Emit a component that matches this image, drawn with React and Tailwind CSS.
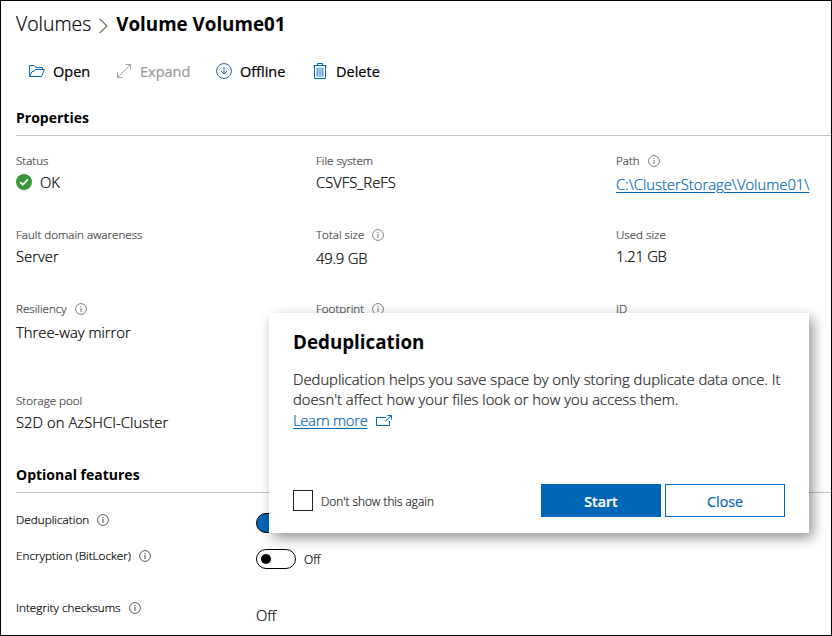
import clsx from "clsx";

const Info = ({ className }) => (
  <svg className={clsx("size-3 shrink-0", className)} viewBox="0 0 12 12" fill="none" stroke="currentColor">
    <circle cx="6" cy="6" r="5.4" strokeWidth="0.75" />
    <path d="M6 5v4M6 3v1.1" strokeWidth="0.85" />
  </svg>
);

const FolderIcon = () => (
  <svg className="-mt-0.5 h-4 w-4" viewBox="0 0 16 16" fill="none" stroke="#0067b8" strokeWidth="1">
    <path d="M0.5 13.5V2.5H5.3L6.8 4.5H13.5V6.5M0.5 13.5H12.6L15.4 6.5H6.2L4.7 8.5H3L0.7 13.5" />
  </svg>
);

const ExpandIcon = () => (
  <svg className="-mt-0.5 h-4 w-4" viewBox="0 0 16 16" fill="none" stroke="#a0a0a0" strokeWidth="1">
    <path d="M1.5 14.5L14.5 1.5M9.5 1.5H14.5V6.5M1.5 9.5V14.5H6.5" />
  </svg>
);

const OfflineIcon = () => (
  <svg className="-mt-0.5 h-4 w-4" viewBox="0 0 16 16" fill="none" stroke="#1b62b5" strokeWidth="1">
    <circle cx="8" cy="8" r="7.4" />
    <path d="M8 4V11M5 8L8 11L11 8" />
  </svg>
);

const TrashIcon = () => (
  <svg className="-mt-0.5 h-4 w-4" viewBox="0 0 16 16" fill="none" stroke="#0067b8" strokeWidth="1">
    <path d="M4 4.5H12V14H4Z" fill="#a9d3f5" stroke="none" />
    <path d="M1.5 2.5H14.5M5.5 2.5V0.5H10.5V2.5M2.5 2.5V15.5H13.5V2.5" />
    <path d="M5.5 5V13M8 5V13M10.5 5V13" stroke="#5b9bd8" />
  </svg>
);

function Action({ icon, children, className }) {
  return (
    <button className={clsx("flex h-6 items-center gap-2 text-[14.5px] leading-6 font-medium", className)}>
      {icon}
      <span>{children}</span>
    </button>
  );
}

function Field({ label, info, children, className }) {
  return (
    <div className="w-[300px] shrink-0">
      <div className={clsx("flex items-center gap-2 text-[11.6px] leading-[17px] text-[#444]", info && "mb-0.5")}>
        <span>{label}</span>
        {info && <Info className="mt-px text-[#555]" />}
      </div>
      <div className={clsx("flex h-[27px] items-center text-[14.8px] leading-[27px]", className)}>{children}</div>
    </div>
  );
}

function FeatureLabel({ children }) {
  return (
    <div className="flex w-60 items-center gap-2 text-[11.75px] leading-4">
      <span>{children}</span>
      <Info className="mt-px text-[#222]" />
    </div>
  );
}

function SectionTitle({ children, className }) {
  return (
    <h2
      className={clsx(
        "h-7 border-b border-[#c4c4c4] text-[14px] leading-5 font-bold [-webkit-text-stroke:0]",
        className
      )}
    >
      {children}
    </h2>
  );
}

export default function App() {
  return (
    <div className="relative h-[636px] w-[832px] overflow-hidden border border-black bg-white pl-[15px] font-['Open_Sans','Noto_Sans',sans-serif] font-[350] whitespace-nowrap text-black [-webkit-text-stroke:0.22px]">
      <header className="flex h-[46px] items-center text-[19.4px] leading-6">
        <span>Volumes</span>
        <svg className="mt-1 ml-2 h-4 w-[9px]" viewBox="0 0 9 16" fill="none" stroke="#6b5a48" strokeWidth="1.1">
          <path d="M0.6 0.8L8 8L0.6 15.2" />
        </svg>
        <h1 className="ml-2 text-[18.8px] font-bold [-webkit-text-stroke:0]">Volume Volume01</h1>
      </header>

      <nav className="mt-[13px] flex h-6 items-center">
        <Action icon={<FolderIcon />} className="ml-[13px] w-[87px]">Open</Action>
        <Action icon={<ExpandIcon />} className="w-[100px] text-[#9a9a9a]">Expand</Action>
        <Action icon={<OfflineIcon />} className="w-[96px]">Offline</Action>
        <Action icon={<TrashIcon />}>Delete</Action>
      </nav>

      <SectionTitle className="mt-6">Properties</SectionTitle>

      <section className="pt-4">
        <div className="flex h-[74px]">
          <Field label="Status">
            <svg className="-mt-0.5 mr-2 h-4 w-4" viewBox="0 0 16 16" fill="none">
              <circle cx="8" cy="8" r="8" fill="#3c963c" />
              <path d="M4.2 8.2L6.8 10.8L11.8 5.4" stroke="white" strokeWidth="1.7" />
            </svg>
            OK
          </Field>
          <Field label="File system">CSVFS_ReFS</Field>
          <Field label="Path" info>
            <a className="text-[#0067b8] underline underline-offset-2">C:\ClusterStorage\Volume01\</a>
          </Field>
        </div>
        <div className="flex h-[74px]">
          <Field label="Fault domain awareness">Server</Field>
          <Field label="Total size" info className="tracking-[-0.2px]">49.9 GB</Field>
          <Field label="Used size" className="tracking-[-0.3px]">1.21 GB</Field>
        </div>
        <div className="flex h-[92px]">
          <Field label="Resiliency" info>Three-way mirror</Field>
          <Field label="Footprint" info />
          <Field label="ID" />
        </div>
        <div className="flex h-[73px]">
          <Field label="Storage pool" className="tracking-[0.05px]">S2D on AzSHCI-Cluster</Field>
        </div>
      </section>

      <SectionTitle>Optional features</SectionTitle>

      <section>
        <div className="flex h-10 items-start pt-5">
          <div className="-mt-0.5">
            <FeatureLabel>Deduplication</FeatureLabel>
          </div>
          <div className="h-5 w-10 shrink-0 rounded-full border border-black bg-[#0067b8]" />
        </div>
        <div className="flex h-12 items-start pt-4">
          <div className="-mt-0.5">
            <FeatureLabel>Encryption (BitLocker)</FeatureLabel>
          </div>
          <div className="flex h-5 w-10 items-center rounded-full border border-black pl-1">
            <div className="size-2.5 rounded-full bg-black" />
          </div>
          <span className="ml-2 text-[12px] leading-[21px]">Off</span>
        </div>
        <div className="flex items-start pt-[18px]">
          <FeatureLabel>Integrity checksums</FeatureLabel>
          <span className="mt-1 text-[14.8px] leading-6">Off</span>
        </div>
      </section>

      <div
        role="dialog"
        className="absolute top-[312px] left-[268px] flex h-[220px] w-[540px] flex-col bg-white px-6 pt-[17px] shadow-[4px_5px_12px_rgba(0,0,0,0.42)]"
      >
        <h2 className="text-[18.8px] leading-6 font-bold [-webkit-text-stroke:0]">Deduplication</h2>
        <p className="mt-[15px] text-[14.8px] leading-5 text-[#222]">
          Deduplication helps you save space by only storing duplicate data once. It
          <br />
          doesn't affect how your files look or how you access them.
        </p>
        <a className="mt-px flex items-center text-[14.8px] leading-5 tracking-[-0.3px] text-[#0067b8]">
          <span className="underline underline-offset-2">Learn more</span>
          <svg className="mt-0.5 ml-2 h-3 w-4" viewBox="0 0 16 12" fill="none" stroke="#0067b8">
            <path d="M10 2.5H0.5V10.5H13.5V6M9.5 6L15 1M11.5 0.5H15.5V4.5" />
          </svg>
        </a>
        <div className="mt-[54px] flex items-center">
          <div className="-mt-px h-[21px] w-5 border border-[#222] bg-white" />
          <span className="ml-2 text-[11.8px] leading-5 text-[#222]">Don't show this again</span>
          <button className="ml-auto h-[33px] w-[120px] bg-[#0067b8] pt-0.5 text-[14.2px] font-semibold text-white">
            Start
          </button>
          <button className="ml-1 h-[33px] w-[120px] border border-[#0067b8] pt-0.5 text-[14.2px] font-medium text-[#0067b8]">
            Close
          </button>
        </div>
      </div>
    </div>
  );
}
